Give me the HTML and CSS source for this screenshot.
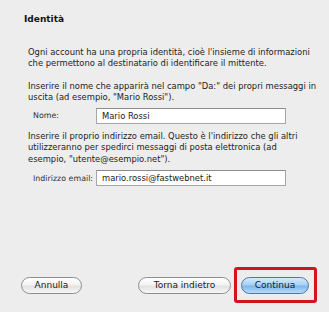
FILE: index.html
```html
<!DOCTYPE html>
<html>
<head>
<meta charset="utf-8">
<link rel="stylesheet" href="styles.css">
</head>
<body>
<div class="panel">
  <div class="title">Identità</div>
  <div class="content">
    <p class="p1">Ogni account ha una propria identità, cioè l'insieme di informazioni<br>che permettono al destinatario di identificare il mittente.</p>
    <p class="p2">Inserire il nome che apparirà nel campo "Da:" dei propri messaggi in<br>uscita (ad esempio, "Mario Rossi").</p>
    <div class="row row-name">
      <span class="label">Nome:</span>
      <span class="field">Mario Rossi</span>
    </div>
    <p class="p3">Inserire il proprio indirizzo email. Questo è l'indirizzo che gli altri<br>utilizzeranno per spedirci messaggi di posta elettronica (ad<br>esempio, "utente@esempio.net").</p>
    <div class="row row-email">
      <span class="label">Indirizzo email:</span>
      <span class="field">mario.rossi@fastwebnet.it</span>
    </div>
  </div>
  <div class="footer">
    <span class="btn btn-cancel">Annulla</span>
    <span class="btn btn-back">Torna indietro</span>
    <span class="highlight"><span class="btn btn-next">Continua</span></span>
  </div>
</div>
</body>
</html>
```
FILE: styles.css
```css
html, body {
  margin: 0;
  padding: 0;
}
body {
  width: 329px;
  height: 312px;
  background: #ededed;
  font-family: "DejaVu Sans", "Liberation Sans", sans-serif;
  color: #222;
  overflow: hidden;
}
.panel {
  box-sizing: border-box;
  height: 312px;
  display: flex;
  flex-direction: column;
  padding-top: 13px;
}
.title {
  font-weight: bold;
  font-size: 9px;
  line-height: 13px;
  padding-left: 24px;
  color: #111;
}
.content {
  padding-left: 28px;
  font-size: 8.4px;
  line-height: 11px;
  white-space: nowrap;
}
.content p {
  margin: 0;
}
.p1 {
  margin-top: 20.5px !important;
}
.p2 {
  margin-top: 12.5px !important;
}
.p3 {
  margin-top: 7px !important;
  line-height: 11.5px;
}
.row {
  display: flex;
  align-items: center;
  height: 16px;
}
.row-name {
  margin-top: 4.5px;
}
.row-email {
  margin-top: 5px;
}
.label {
  width: 68px;
  padding-left: 5px;
  box-sizing: border-box;
  font-size: 7.9px;
  color: #333;
}
.field {
  box-sizing: border-box;
  width: 190px;
  height: 16px;
  background: #fff;
  border: 1px solid #a6a6a6;
  border-top-color: #8c8c8c;
  padding-left: 5px;
  line-height: 14px;
  color: #1a1a1a;
}
.footer {
  margin-top: auto;
  margin-bottom: 9px;
  display: flex;
  align-items: center;
  padding-left: 21px;
}
.btn {
  box-sizing: border-box;
  height: 17px;
  border: 1px solid #8d8d8d;
  border-radius: 9px;
  background: linear-gradient(#ffffff 0%, #f3f3f3 45%, #e2e2e2 55%, #f7f7f7 100%);
  font-size: 9px;
  line-height: 15px;
  text-align: center;
  color: #1a1a1a;
}
.btn-cancel {
  width: 61px;
}
.btn-back {
  width: 93px;
  margin-left: 56px;
}
.highlight {
  display: flex;
  box-sizing: border-box;
  margin-left: 3px;
  width: 83px;
  height: 36px;
  border: 3px solid #d4141c;
  border-radius: 3px;
  padding: 7px 0 0 4px;
}
.btn-next {
  width: 68px;
  border-color: #52759c;
  background: linear-gradient(#d6eafb 0%, #a9d1f3 45%, #7fb8ea 55%, #b5dcfb 100%);
  color: #0f1e30;
}
```
